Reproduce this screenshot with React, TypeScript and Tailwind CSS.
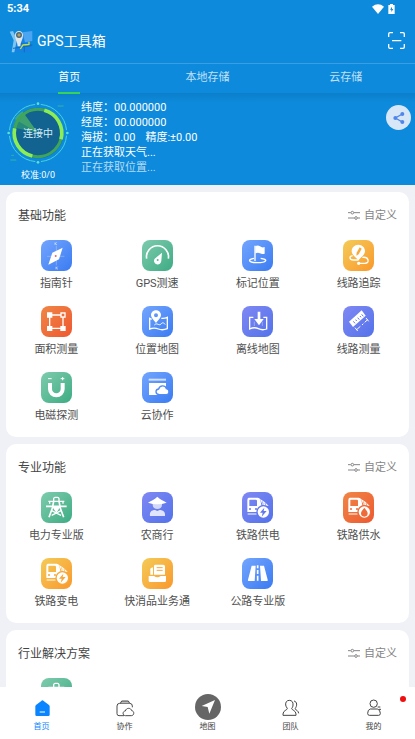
import React from 'react';

type Tone = 'blue' | 'green' | 'amber' | 'purple' | 'red';

interface Tool {
  label?: string;
  tone: Tone;
  icon: React.ReactNode;
}

interface NavItem {
  label: string;
  active?: boolean;
  badge?: boolean;
  icon: React.ReactNode;
}

const tones: Record<Tone, string> = {
  blue: 'bg-linear-to-br from-[#73a5fd] to-[#3a7bf2] text-[#4f8af6]',
  green: 'bg-linear-to-br from-[#7dcbae] to-[#3bac84] text-[#55b794]',
  amber: 'bg-linear-to-br from-[#f3cb57] to-[#f9982a] text-[#f7a93a]',
  purple: 'bg-linear-to-br from-[#8088f3] to-[#5272ea] text-[#6478ee]',
  red: 'bg-linear-to-br from-[#ef8646] to-[#ee5730] text-[#ee6a38]',
};

/* Shared train body, the badge on top differs per tool */
const Train = ({ children }: { children: React.ReactNode }) => (
  <>
    <path
      fillRule="evenodd"
      d="M20 17h27q6 0 8 6l4 22v15H16V25q0-7 4-8zM22 24v18h23V26q0-3-4-3H25q-3 0-3 1z"
      fill="#fff"
    />
    <path d="M54 21l14 9 12 12-18-3z" fill="#fff" />
    <path d="M61 28l3 10m5-6l2 8" stroke="currentColor" strokeWidth="2" />
    <circle cx="24" cy="51" r="3" fill="currentColor" />
    <circle cx="42" cy="51" r="3" fill="currentColor" />
    <path d="M17 66h27" stroke="#fff" strokeWidth="3" />
    <circle cx="64" cy="60" r="21" fill="currentColor" />
    <circle cx="64" cy="60" r="17" fill="#fff" />
    {children}
  </>
);

const bolt = <path d="M67 47L54 62h8l-3 12 15-17h-9z" fill="currentColor" />;

const tower = (
  <g fill="none" stroke="#fff" strokeWidth="4" strokeLinejoin="round">
    <path d="M38 28v-8q1-4 4-4h8q3 0 4 4v8M22 28h48M26 29v6M66 29v6" />
    <path d="M15 43h62M38 28l-3 15M54 28l3 15M36 43L24 76M56 43l12 33" strokeWidth="5" />
    <path d="M32 56l28 14M60 56L32 70" />
    <path d="M36 44h20l-10 15z" fill="#fff" />
  </g>
);

const basicTools: Tool[] = [
  {
    label: '指南针',
    tone: 'blue',
    icon: (
      <>
        <path d="M46 18v58M18 49h52" stroke="#fff" strokeOpacity=".4" strokeWidth="2" />
        <path d="M65 23L54 58 22 74l12-36z" fill="#fff" />
        <circle cx="44" cy="48" r="3" fill="#e5646e" />
        <path d="M42 7v8m5-8l-4 4 5 4M45 80v8m5-8l-4 4 5 4" fill="none" stroke="#fff" strokeOpacity=".8" strokeWidth="2" />
      </>
    ),
  },
  {
    label: 'GPS测速',
    tone: 'green',
    icon: (
      <>
        <path d="M14 56A33 33 0 1 1 79 56" fill="none" stroke="#fff" strokeWidth="5" />
        <path d="M60 38l-2 24a11 11 0 1 1-20-6z" fill="#fff" />
        <circle cx="47" cy="60" r="3" fill="currentColor" />
      </>
    ),
  },
  {
    label: '标记位置',
    tone: 'blue',
    icon: (
      <>
        <path d="M36 55c-20 3-18 13 10 13s34-10 10-13" fill="none" stroke="#fff" strokeWidth="4" />
        <path d="M39 17v46" stroke="#fff" strokeWidth="4" />
        <path d="M40 18q8-4 14 1t14 2v20q-8 3-14-1t-14 0z" fill="#fff" />
      </>
    ),
  },
  {
    label: '线路追踪',
    tone: 'amber',
    icon: (
      <>
        <path d="M29 47c-12 2-10 13 2 13h14M58 52c20-3 23 18 8 18H48" fill="none" stroke="#fff" strokeWidth="4" />
        <circle cx="47" cy="70" r="5" fill="#fff" />
        <path d="M46 14c12 0 20 9 20 19 0 12-13 18-20 29-7-11-20-17-20-29 0-10 8-19 20-19z" fill="#fff" />
        <path d="M50 22l6 4-9 17-7 4 1-9z" fill="currentColor" />
      </>
    ),
  },
  {
    label: '面积测量',
    tone: 'red',
    icon: (
      <>
        <path d="M26 27h40v40H26z" fill="none" stroke="#fff" strokeWidth="4" />
        <path d="M18 19h16v16H18zM18 60h16v15H18zM58 60h16v15H58zM58 19h16v16H58z" fill="#fff" />
        <path d="M62 23h8v8h-8z" fill="currentColor" />
      </>
    ),
  },
  {
    label: '位置地图',
    tone: 'blue',
    icon: (
      <>
        <path d="M29 40l-6-3v32q14-5 26 0t27-1V34q-8 4-18 3" fill="none" stroke="#fff" strokeWidth="4" />
        <path d="M37 57c8-9 14 4 20-3s8-2 13 1" fill="none" stroke="#fff" strokeWidth="3" />
        <path
          fillRule="evenodd"
          d="M42 13c9 0 15 7 15 14 0 9-9 15-15 24-6-9-15-15-15-24 0-7 6-14 15-14zm0 9a6 6 0 1 0 0 12 6 6 0 0 0 0-12z"
          fill="#fff"
        />
      </>
    ),
  },
  {
    label: '离线地图',
    tone: 'purple',
    icon: (
      <>
        <path d="M34 34H23v35q14-7 26-1t25 1V34H64" fill="none" stroke="#fff" strokeWidth="4" />
        <path d="M37 47v13M61 47v13" stroke="#fff" strokeOpacity=".5" strokeWidth="2" />
        <path d="M47 17h8v22h10L51 58 37 39h10z" fill="#fff" />
      </>
    ),
  },
  {
    label: '线路测量',
    tone: 'purple',
    icon: (
      <>
        <path d="M56 13l12 16-38 34-12-16z" fill="#fff" />
        <path d="M31 46l5 6m2-11l3 4m3-10l5 6m2-11l3 4m2-9l5 6" stroke="currentColor" strokeWidth="3" />
        <path d="M42 70l10-9m5-4l4-4m4-4l9-8" stroke="#fff" strokeWidth="3" />
        <path d="M36 65l8 10M69 36l8 10" stroke="#fff" strokeWidth="3" />
      </>
    ),
  },
  {
    label: '电磁探测',
    tone: 'green',
    icon: (
      <>
        <path d="M27 33v18a19 19 0 0 0 38 0V33" fill="none" stroke="#fff" strokeWidth="12" />
        <path d="M21 20h11M59 20h11M65 15v10" stroke="#fff" strokeWidth="3" />
      </>
    ),
  },
  {
    label: '云协作',
    tone: 'blue',
    icon: (
      <>
        <path d="M20 20h52v6H20z" fill="#fff" fillOpacity=".7" />
        <path d="M21 33h51v36H21z" fill="#fff" />
        <path
          d="M52 68c-14-1-12-16-2-17 3-12 20-12 23-1 11 2 10 18 0 18z"
          fill="#fff"
          stroke="currentColor"
          strokeWidth="4"
        />
      </>
    ),
  },
];

const proTools: Tool[] = [
  { label: '电力专业版', tone: 'green', icon: tower },
  {
    label: '农商行',
    tone: 'purple',
    icon: (
      <>
        <path d="M32 34h28v5c0 16-28 16-28 0z" fill="#fff" fillOpacity=".7" />
        <path d="M46 14c7 8 18 12 28 18q-28 10-56 0c10-6 21-10 28-18z" fill="#fff" />
        <path d="M24 72c-2-12 5-18 15-18l7 3 7-3c10 0 18 6 16 18z" fill="#fff" fillOpacity=".8" />
      </>
    ),
  },
  { label: '铁路供电', tone: 'purple', icon: <Train>{bolt}</Train> },
  {
    label: '铁路供水',
    tone: 'red',
    icon: (
      <Train>
        <path d="M64 47c6 8 10 12 10 17a10 10 0 0 1-20 0c0-5 4-9 10-17z" fill="currentColor" />
      </Train>
    ),
  },
  { label: '铁路变电', tone: 'amber', icon: <Train>{bolt}</Train> },
  {
    label: '快消品业务通',
    tone: 'amber',
    icon: (
      <>
        <path d="M40 20h24q5 0 5 5v25H36V24q0-4 4-4z" fill="#fff" />
        <path d="M27 30l6-2v22h-8V34q0-3 2-4z" fill="#fff" />
        <path d="M44 29h18M44 37h18" stroke="currentColor" strokeWidth="3" />
        <path d="M20 54h16q10 8 20 0h16v14q0 4-4 4H24q-4 0-4-4z" fill="#fff" />
      </>
    ),
  },
  {
    label: '公路专业版',
    tone: 'blue',
    icon: (
      <>
        <path d="M29 23h12l-3 46H19q-2-2-1-4zM54 23h12l11 42q1 2-1 4H57z" fill="#fff" />
        <path d="M47 22v9M47 36v12M47 53v15" stroke="#fff" strokeWidth="5" />
      </>
    ),
  },
];

const solutionTools: Tool[] = [{ tone: 'green', icon: tower }];

const navItems: NavItem[] = [
  {
    label: '首页',
    active: true,
    icon: (
      <>
        <path d="M40 19q2 0 4 2l16 12q2 2 2 4v25q0 4-4 4H23q-4 0-4-4V37q0-2 2-4l16-12q1-2 3-2z" fill="#0a84ff" />
        <path d="M32 54h16" stroke="#fff" strokeWidth="3" />
      </>
    ),
  },
  {
    label: '协作',
    icon: (
      <g fill="none" stroke="#4a4a4a" strokeWidth="3">
        <path d="M36 65H21q-6 0-6-6V36q0-8 8-8h30q8 0 8 8v4" />
        <path d="M25 28l4-7h20l4 7" fill="#bbb" />
        <path d="M40 65c-10-1-8-14 0-14 3-11 17-10 19-1 9 1 8 15-1 15z" />
      </g>
    ),
  },
  {
    label: '地图',
    icon: (
      <>
        <circle cx="39" cy="39" r="39" fill="#666" />
        <path d="M60 18L43 59l-5-20-18-3z" fill="#fff" />
      </>
    ),
  },
  {
    label: '团队',
    icon: (
      <g fill="none" stroke="#444" strokeWidth="3" strokeLinejoin="round">
        <path d="M34 19c8 0 12 6 11 14 0 5-2 8-4 10 0 6 13 6 13 17v4H15v-4c0-11 13-11 13-17-3-3-4-6-5-10-1-8 3-14 11-14z" />
        <path d="M48 21c10 2 10 15 3 23 4 5 10 6 11 14" />
      </g>
    ),
  },
  {
    label: '我的',
    badge: true,
    icon: (
      <g fill="none" stroke="#444" strokeWidth="3">
        <circle cx="38" cy="29" r="11" />
        <path d="M28 45h21q9 2 9 13 0 6-5 6H25q-5 0-5-6 0-11 8-13zM50 39h8M54 46h6" />
      </g>
    ),
  },
];

const Logo = () => (
  <svg viewBox="0 0 72 72" className="size-6" aria-hidden="true">
    <path d="M5 4l14 12 33-8 18-6v34L56 44l12 4v22H8l8-28z" fill="#1583e4" />
    <path d="M2 8l10-2 12 26-8 38h-8l6-36z" fill="#7cc4f2" />
    <path d="M40 10l30-4v30L48 40z" fill="#4ba5f0" />
    <path d="M33 44l37 4M46 46v24M12 58l56-8" stroke="#116bc0" strokeWidth="3" />
    <path d="M34 60l8-12 18-2V38" fill="none" stroke="#c7dd42" strokeWidth="4" />
    <path d="M18 18c0-16 24-16 24 0 0 14-7 18-8 34h-8c-1-16-8-20-8-34z" fill="#dfe6ea" />
    <circle cx="30" cy="18" r="9" fill="#4c6879" />
    <path d="M25 18h10M30 13v10" stroke="#d5b45f" strokeWidth="3" />
  </svg>
);

const Radar = () => (
  <svg viewBox="0 0 186 186" className="size-[62px]" aria-hidden="true">
    <circle cx="93" cy="93" r="76" fill="#12638f" />
    <path d="M93 93L46 28A80 80 0 0 0 17 76z" fill="#37a56e" fillOpacity=".6" />
    <path d="M93 93L46 28A80 80 0 0 0 22 50z" fill="#5fc35d" fillOpacity=".4" />
    <circle cx="93" cy="93" r="71" fill="none" stroke="#3fa55b" strokeWidth="9" />
    <path d="M112 25A71 71 0 0 1 162 112" fill="none" stroke="#8ded55" strokeWidth="11" />
    <path d="M23 79A71 71 0 0 0 76 162" fill="none" stroke="#8ded55" strokeWidth="11" />
    <circle cx="93" cy="93" r="86" fill="none" stroke="#47d4da" strokeWidth="3" strokeDasharray="118 17" strokeDashoffset="-8" />
    <g fill="#5be3cf">
      <circle cx="93" cy="5" r="4" />
      <circle cx="93" cy="181" r="4" />
      <circle cx="5" cy="93" r="4" />
      <circle cx="181" cy="93" r="4" />
    </g>
    <path d="M152 12h18M10 174h18M13 160h8" stroke="#30b5a3" strokeWidth="3" />
  </svg>
);

const ToolCard = ({ title, tools }: { title: string; tools: Tool[] }) => (
  <section className="rounded-[10px] bg-white pb-3.5">
    <div className="flex h-12 items-center justify-between px-3">
      <h2 className="text-xs text-[#444]">{title}</h2>
      <button type="button" className="flex items-center gap-1 text-[11px] text-[#858585]">
        <svg viewBox="0 0 36 36" className="size-3" fill="none" stroke="currentColor" strokeWidth="3" aria-hidden="true">
          <path d="M0 8h8M18 8h18M0 24h19M29 24h7" />
          <circle cx="13" cy="8" r="4" />
          <circle cx="24" cy="24" r="4" />
        </svg>
        自定义
      </button>
    </div>
    <div className="grid grid-cols-4 gap-y-[15px]">
      {tools.map((tool, index) => (
        <button key={index} type="button" className="flex flex-col items-center">
          <span className={`block size-[31px] rounded-lg ${tones[tool.tone]}`}>
            <svg viewBox="0 0 93 93" className="size-full" aria-hidden="true">
              {tool.icon}
            </svg>
          </span>
          <span className="h-5 pt-[5px] text-[11px] leading-4 whitespace-nowrap text-[#505050]">{tool.label}</span>
        </button>
      ))}
    </div>
  </section>
);

const tabs = ['首页', '本地存储', '云存储'];

export default function App() {
  return (
    <div className="flex h-screen flex-col overflow-hidden bg-[#f0f1f7] font-[Roboto,'Noto_Sans_CJK_SC',sans-serif]">
      <header className="shrink-0 bg-[#0d8adb] text-white">
        {/* Status bar */}
        <div className="flex h-[18px] items-center justify-between pr-5 pl-[7px]">
          <span className="text-[11px] font-bold">5:34</span>
          <div className="flex items-center gap-1">
            <svg viewBox="0 0 36 30" className="h-2.5 w-3" fill="currentColor" aria-hidden="true">
              <path d="M0 8Q18-6 36 8L18 30z" />
            </svg>
            <svg viewBox="0 0 21 30" className="h-2.5 w-[7px]" aria-hidden="true">
              <path d="M6 0h9v3h5v27H1V3h5z" fill="currentColor" />
              <path d="M12 8l-6 9h4v7l6-9h-4z" fill="#0d8adb" />
            </svg>
          </div>
        </div>

        <div className="flex h-[45px] items-center justify-between pr-2.5 pl-[9px]">
          <div className="flex items-center gap-1">
            <Logo />
            <h1 className="text-sm">GPS工具箱</h1>
          </div>
          <button type="button" aria-label="扫一扫">
            <svg viewBox="0 0 51 51" className="size-[17px]" fill="none" stroke="currentColor" strokeWidth="4" aria-hidden="true">
              <path d="M2 15V6q0-4 4-4h9M36 2h9q4 0 4 4v9M49 36v9q0 4-4 4h-9M15 49H6q-4 0-4-4v-9M12 26h28" />
            </svg>
          </button>
        </div>

        <nav className="grid h-[30px] grid-cols-3 border-t border-[#3a9fe2] text-[11px]">
          {tabs.map((tab, index) => (
            <a key={tab} href="#" className="flex justify-center">
              <span
                className={
                  index === 0
                    ? 'border-b-2 border-[#36d25a] leading-7'
                    : 'leading-7 text-[#c3e0f7]'
                }
              >
                {tab}
              </span>
            </a>
          ))}
        </nav>

        {/* Position info */}
        <div className="flex h-[92px] items-start bg-linear-to-b from-[#0b7fca] to-[#0d8adb] to-10% pr-1 pl-[7px]">
          <div className="flex w-[62px] flex-col items-center pt-[9px]">
            <div className="grid place-items-center *:col-start-1 *:row-start-1">
              <Radar />
              <span className="text-[10px] text-[#d4ecf4]">连接中</span>
            </div>
            <span className="pt-[3px] text-[9px] leading-4">校准:0/0</span>
          </div>
          <div className="flex-1 pt-[7px] pl-3 text-[11px] leading-[15px]">
            <p>纬度：00.000000</p>
            <p>经度：00.000000</p>
            <p className="flex gap-2.5">
              <span>海拔：0.00</span>
              <span>精度:±0.00</span>
            </p>
            <p>正在获取天气...</p>
            <p className="text-[#b5dbf5]">正在获取位置...</p>
          </div>
          <button
            type="button"
            aria-label="分享"
            className="mt-3 flex size-[25px] items-center justify-center rounded-full bg-[#d8e7f8] text-[#4f86ea]"
          >
            <svg viewBox="0 0 36 36" className="size-3" fill="currentColor" aria-hidden="true">
              <path d="M28 6L7 18l21 12" fill="none" stroke="currentColor" strokeWidth="4" />
              <circle cx="28" cy="6" r="6" />
              <circle cx="7" cy="18" r="6" />
              <circle cx="28" cy="30" r="6" />
            </svg>
          </button>
        </div>
      </header>

      <main className="flex min-h-0 flex-1 flex-col gap-[7px] overflow-y-auto px-1.5 pt-[7px] [scrollbar-width:none] *:shrink-0">
        <ToolCard title="基础功能" tools={basicTools} />
        <ToolCard title="专业功能" tools={proTools} />
        <ToolCard title="行业解决方案" tools={solutionTools} />
      </main>

      <nav className="grid h-[52px] shrink-0 grid-cols-5 bg-white">
        {navItems.map((item) => (
          <a
            key={item.label}
            href="#"
            className={`relative flex flex-col items-center pt-[7px] text-[8px] leading-[14px] ${
              item.active ? 'text-[#0a84ff]' : 'text-[#444]'
            }`}
          >
            <svg viewBox="0 0 78 78" className="size-[26px]" aria-hidden="true">
              {item.icon}
            </svg>
            {item.label}
            {item.badge && <span className="absolute top-[9px] right-[9px] size-1.5 rounded-full bg-[#f00d0d]" />}
          </a>
        ))}
      </nav>
    </div>
  );
}
